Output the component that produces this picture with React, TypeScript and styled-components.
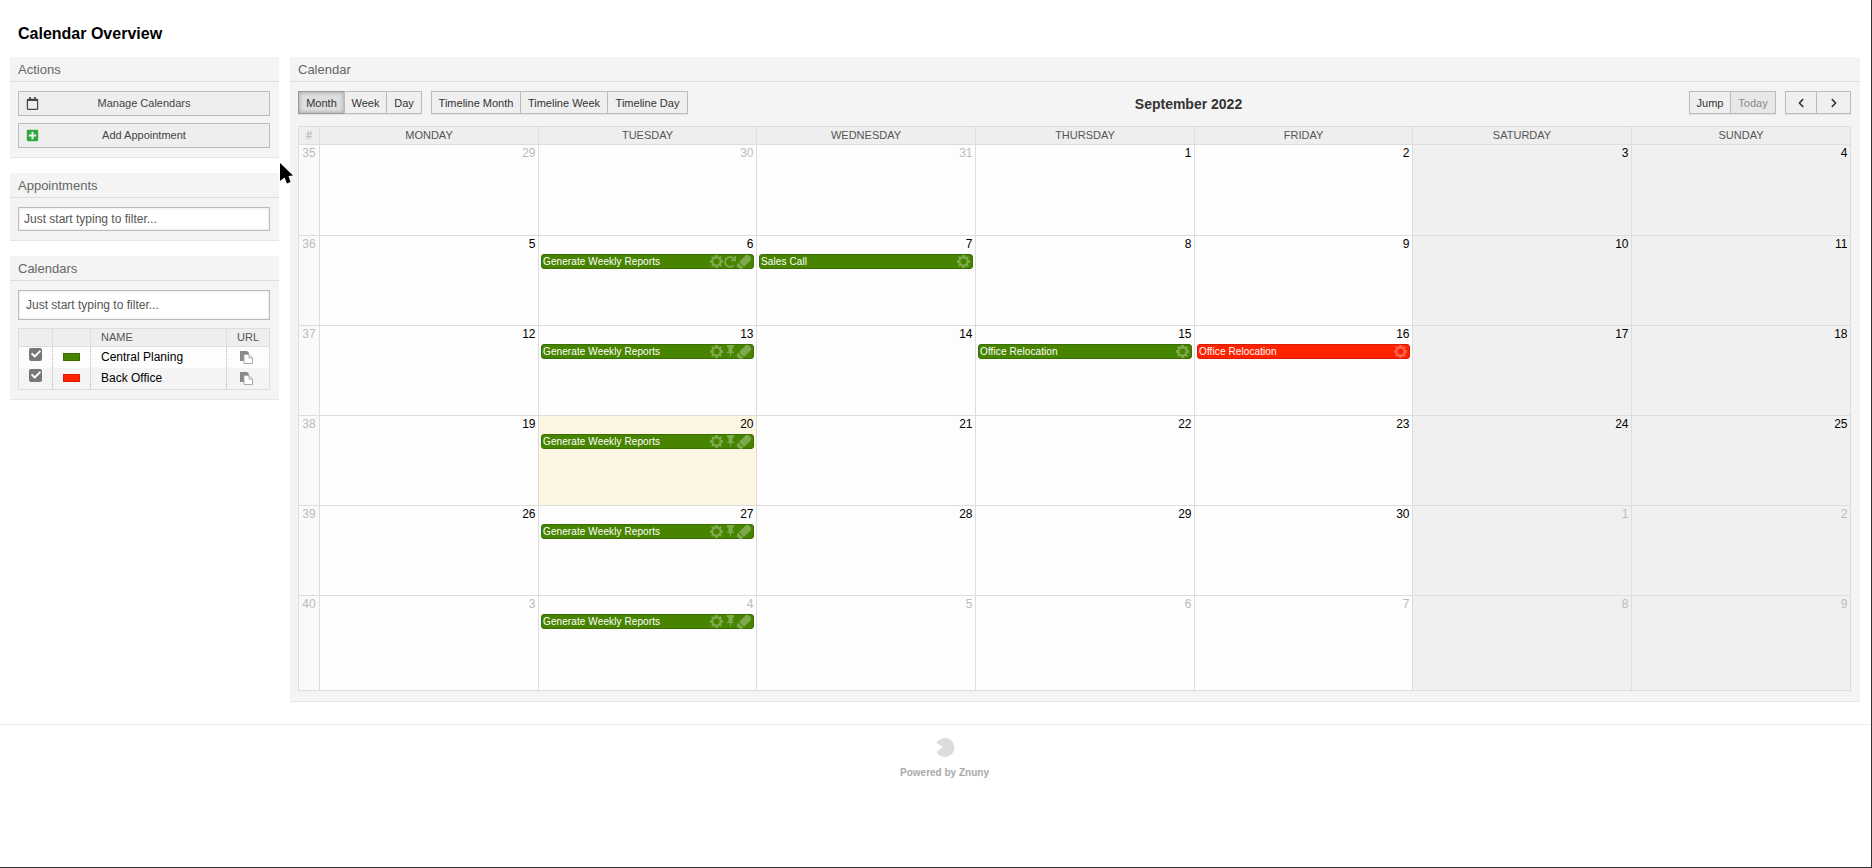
import React from 'react'
import styled, { createGlobalStyle } from 'styled-components'
import {
  FaChevronLeft,
  FaChevronRight,
  FaCheck,
  FaPlusSquare,
  FaRedo,
  FaRegCalendar,
} from 'react-icons/fa'

const GlobalStyle = createGlobalStyle`
  html, body {
    margin: 0;
    padding: 0;
    background: #fff;
    font-family: "Liberation Sans", Arial, sans-serif;
  }
`

const Page = styled.div`
  position: relative;
  box-sizing: border-box;
  width: 1872px;
  height: 868px;
  overflow: hidden;
  border-right: 1px solid #333;
  border-bottom: 1px solid #333;
`

const Title = styled.h1`
  margin: 0;
  padding: 24px 0 0 18px;
  height: 57px;
  box-sizing: border-box;
  font-size: 16px;
  line-height: 19px;
  font-weight: bold;
  color: #000;
`

const Columns = styled.div`
  display: flex;
  align-items: flex-start;
  gap: 11px;
  padding-left: 10px;
`

const Sidebar = styled.aside`
  display: flex;
  flex-direction: column;
  gap: 15px;
  width: 269px;
`

const Panel = styled.section`
  box-sizing: border-box;
  background: #f4f4f4;
  border-bottom: 1px solid #e6e6e6;
`

const MainPanel = styled(Panel)`
  width: 1570px;
`

const PanelHead = styled.h2`
  margin: 0;
  box-sizing: border-box;
  height: 25px;
  padding: 1px 8px 0;
  font-size: 13px;
  line-height: 24px;
  font-weight: normal;
  color: #666;
  border-bottom: 1px solid #ddd;
`

const PanelBody = styled.div`
  display: flex;
  flex-direction: column;
  gap: 7px;
  padding: 9px 9px 9px 8px;
`

const MainBody = styled.div`
  padding: 9px 9px 10px 8px;
`

const ActionButton = styled.button`
  position: relative;
  box-sizing: border-box;
  height: 25px;
  width: 100%;
  padding: 0 0 2px;
  background: #eee;
  border: 1px solid #bbb;
  font: 11px "Liberation Sans", Arial, sans-serif;
  color: #444;
  text-align: center;

  svg {
    position: absolute;
    left: 7px;
    top: 5px;
  }
`

const Filter = styled.input<{ $tall?: boolean }>`
  box-sizing: border-box;
  width: 100%;
  height: ${p => (p.$tall ? '29.5px' : '24px')};
  padding: 0 ${p => (p.$tall ? '7px' : '5px')};
  margin: 0;
  background: #fff;
  border: 1px solid #bbb;
  outline: none;
  box-shadow: inset 0 0 3px #ddd;
  font: 12px "Liberation Sans", Arial, sans-serif;

  &::placeholder {
    color: #555;
    opacity: 1;
  }
`

const CalendarTable = styled.table`
  width: 100%;
  table-layout: fixed;
  border-collapse: collapse;
  margin-top: 1px;
  border: 1px solid #ddd;
  font-size: 12px;
  color: #000;

  th {
    height: 17px;
    padding: 0 10px;
    background: #eee;
    border-left: 1px solid #ddd;
    border-bottom: 1px solid #ddd;
    font-size: 11px;
    font-weight: normal;
    text-align: left;
    color: #555;
  }

  td {
    height: 20px;
    padding: 0 10px;
    border-left: 1px dotted #bbb;
    background: #fdfdfd;
  }

  tr:nth-child(even) td {
    background: #f4f4f4;
  }

  th:first-child,
  td:first-child {
    border-left: none;
  }

  td:nth-child(-n + 2),
  th:nth-child(-n + 2) {
    padding: 0;
    text-align: center;
    line-height: 0;
  }

  td:first-child {
    vertical-align: top;
    padding-top: 1px;
  }
`

const CheckBox = styled.span`
  display: inline-flex;
  align-items: center;
  justify-content: center;
  width: 13px;
  height: 13px;
  border-radius: 2px;
  background: #777;
  color: #fff;
`

const Swatch = styled.span<{ $color: string; $edge: string }>`
  display: inline-block;
  box-sizing: border-box;
  width: 17px;
  height: 8px;
  background: ${p => p.$color};
  border: 1px solid ${p => p.$edge};
`

const CopySvg = styled.svg`
  display: block;
  margin: 1px 0 0 3px;
`

const CopyIcon = () => (
  <CopySvg width="13" height="13" viewBox="0 0 13 13">
    <path d="M0 0h7l2 2v8H0z" fill="#8a8a8a" />
    <path d="M4 3.5h5l3.5 3.5v5.5H4z" fill="#fff" stroke="#aaa" />
    <path d="M9 3.5V7h3.5" fill="none" stroke="#aaa" />
  </CopySvg>
)

const Toolbar = styled.div`
  display: flex;
  align-items: center;
  height: 23px;
  margin-bottom: 12px;
`

const ButtonGroup = styled.div`
  display: flex;
  box-shadow: 0 1px 1px #e4e4e4;
`

const ToolButton = styled.button<{ $w: number; $active?: boolean; $off?: boolean }>`
  box-sizing: border-box;
  width: ${p => p.$w}px;
  height: 23px;
  padding: 0;
  margin-left: -1px;
  border: 1px solid #bbb;
  background: ${p => (p.$active ? '#dedede' : p.$off ? '#e8e8e8' : '#efefef')};
  box-shadow: ${p => (p.$active ? 'inset 0 0 4px #999' : 'none')};
  border-color: ${p => (p.$active ? '#999' : '#bbb')};
  font: 11px "Liberation Sans", Arial, sans-serif;
  color: ${p => (p.$off ? '#888' : '#333')};
  display: flex;
  align-items: center;
  justify-content: center;

  &:first-child {
    margin-left: 0;
  }
`

const Spacer = styled.div<{ $w: number }>`
  width: ${p => p.$w}px;
  flex: none;
`

const MonthTitle = styled.h3`
  flex: 1;
  margin: 0;
  padding-top: 2px;
  font-size: 14px;
  font-weight: bold;
  color: #333;
  text-align: center;
`

const Grid = styled.div`
  display: grid;
  grid-template-columns: 20px 219px 218px 219px 219px 218px 219px 219px;
  grid-template-rows: 17px 91px 90px 90px 90px 90px 95px;
  border: 1px solid #ddd;
`

const HeadCell = styled.div<{ $week?: boolean }>`
  box-sizing: border-box;
  background: #eee;
  border-left: ${p => (p.$week ? 'none' : '1px solid #ddd')};
  font-size: 11px;
  line-height: 16px;
  text-align: center;
  color: ${p => (p.$week ? '#aaa' : '#555')};
`

const WeekCell = styled.div`
  box-sizing: border-box;
  background: #fafafa;
  border-top: 1px solid #ddd;
  padding-top: 1px;
  font-size: 12px;
  line-height: 15px;
  text-align: center;
  color: #bbb;
`

const DayCell = styled.div<{ $bg: string }>`
  box-sizing: border-box;
  min-width: 0;
  background: ${p => p.$bg};
  border-top: 1px solid #ddd;
  border-left: 1px solid #ddd;
`

const DayNumber = styled.div<{ $muted: boolean }>`
  height: 18px;
  padding: 1px 2.5px 0 0;
  box-sizing: border-box;
  font-size: 12px;
  line-height: 15px;
  text-align: right;
  color: ${p => (p.$muted ? '#bbb' : '#000')};
`

const Event = styled.div<{ $red?: boolean }>`
  display: flex;
  align-items: center;
  box-sizing: border-box;
  height: 15px;
  margin: 0 2px;
  padding: 0 2px 0 1px;
  border: 1px solid ${p => (p.$red ? '#d91d00' : '#3b6e00')};
  border-radius: 3px;
  background: ${p => (p.$red ? '#ff2200' : '#478400')};
  font-size: 10px;
  letter-spacing: 0.1px;
  line-height: 13px;
  color: #fff;
  white-space: nowrap;
`

const EventName = styled.span`
  flex: 1;
  overflow: hidden;
`

const EventIcons = styled.span`
  display: flex;
  align-items: center;
  gap: 1px;
  color: rgba(255, 255, 255, 0.3);
`

const GearIcon = () => (
  <svg width="13" height="13" viewBox="0 0 13 13" fill="currentColor">
    <path
      fillRule="evenodd"
      d="M5.2 0h2.6l.3 1.6 1.2.5L10.700 1.200l1.100 1.100-.9 1.400.5 1.200 1.600.3v2.600l-1.600.3-.5 1.200.9 1.400-1.100 1.100-1.400-.9-1.200.5-.3 1.600H5.200l-.3-1.600-1.200-.5-1.400.9-1.100-1.100.9-1.400-.5-1.200L0 7.800V5.200l1.600-.3.5-1.200-.9-1.400 1.100-1.100 1.400.9 1.200-.5zM6.500 3.500a3 3 0 1 0 0 6 3 3 0 0 0 0-6z"
    />
  </svg>
)

const PinSvg = styled.svg`
  margin: 0 2px 0 3px;
`

const PinIcon = () => (
  <PinSvg width="7" height="13" viewBox="0 0 7 13" fill="currentColor">
    <path d="M0 0h7v2L5.500 3v4H7v1H4.300l-.8 5-.8-5H0V7h1.500V3L0 2z" />
  </PinSvg>
)

const TicketIcon = () => (
  <svg width="14" height="14" viewBox="0 0 14 14" fill="currentColor">
    <g transform="rotate(-45 7 7)">
      <path d="M-1 3.500h3.500v7H-1z" />
      <path d="M3.500 3.500H15v7H3.500z" />
    </g>
  </svg>
)

const Footer = styled.footer`
  margin-top: 22px;
  padding: 12px 0 0 18px;
  border-top: 1px solid #eee;
  display: flex;
  flex-direction: column;
  align-items: center;
  gap: 10px;
  font-size: 10px;
  font-weight: bold;
  line-height: 12px;
  color: #aaa;
`

const Cursor = styled.svg`
  position: absolute;
  left: 280px;
  top: 163px;
`

type Ev = { name: string; icons: ('redo' | 'pin' | 'ticket')[]; red?: boolean }

const series = (second: 'redo' | 'pin'): Ev => ({
  name: 'Generate Weekly Reports',
  icons: [second, 'ticket'],
})

// cell index counted from monday 29 aug
const events: Record<number, Ev> = {
  8: series('redo'),
  9: { name: 'Sales Call', icons: [] },
  15: series('pin'),
  17: { name: 'Office Relocation', icons: [] },
  18: { name: 'Office Relocation', icons: [], red: true },
  22: series('pin'),
  29: series('pin'),
  36: series('pin'),
}

const dayNames = ['MONDAY', 'TUESDAY', 'WEDNESDAY', 'THURSDAY', 'FRIDAY', 'SATURDAY', 'SUNDAY']
const weeks = [35, 36, 37, 38, 39, 40]

function dayOf(i: number) {
  if (i < 3) return { day: 29 + i, muted: true }
  if (i < 33) return { day: i - 2, muted: false }
  return { day: i - 32, muted: true }
}

function cellColor(i: number) {
  if (i === 22) return '#fdf6e2'
  return i % 7 >= 5 ? '#f0f0f0' : '#fdfdfd'
}

function EventBar({ ev }: { ev: Ev }) {
  return (
    <Event $red={ev.red}>
      <EventName>{ev.name}</EventName>
      <EventIcons>
        <GearIcon />
        {ev.icons.map(icon => {
          if (icon === 'redo') return <FaRedo key={icon} size={12} />
          if (icon === 'pin') return <PinIcon key={icon} />
          return <TicketIcon key={icon} />
        })}
      </EventIcons>
    </Event>
  )
}

const calendars = [
  { name: 'Central Planing', color: '#478400', edge: '#3b6e00' },
  { name: 'Back Office', color: '#ff2200', edge: '#d91d00' },
]

export default function App() {
  return (
    <Page>
      <GlobalStyle />
      <Title>Calendar Overview</Title>
      <Columns>
        <Sidebar>
          <Panel>
            <PanelHead>Actions</PanelHead>
            <PanelBody>
              <ActionButton>
                <FaRegCalendar size={13} color="#444" />
                Manage Calendars
              </ActionButton>
              <ActionButton>
                <FaPlusSquare size={13} color="#2eaa3a" />
                Add Appointment
              </ActionButton>
            </PanelBody>
          </Panel>
          <Panel>
            <PanelHead>Appointments</PanelHead>
            <PanelBody>
              <Filter placeholder="Just start typing to filter..." />
            </PanelBody>
          </Panel>
          <Panel>
            <PanelHead>Calendars</PanelHead>
            <PanelBody>
              <Filter $tall placeholder="Just start typing to filter..." />
              <CalendarTable>
                <colgroup>
                  <col style={{ width: 34 }} />
                  <col style={{ width: 38 }} />
                  <col />
                  <col style={{ width: 43 }} />
                </colgroup>
                <thead>
                  <tr>
                    <th />
                    <th />
                    <th>NAME</th>
                    <th>URL</th>
                  </tr>
                </thead>
                <tbody>
                  {calendars.map(c => (
                    <tr key={c.name}>
                      <td>
                        <CheckBox>
                          <FaCheck size={10} />
                        </CheckBox>
                      </td>
                      <td>
                        <Swatch $color={c.color} $edge={c.edge} />
                      </td>
                      <td>{c.name}</td>
                      <td>
                        <CopyIcon />
                      </td>
                    </tr>
                  ))}
                </tbody>
              </CalendarTable>
            </PanelBody>
          </Panel>
        </Sidebar>
        <MainPanel>
          <PanelHead>Calendar</PanelHead>
          <MainBody>
            <Toolbar>
              <ButtonGroup>
                <ToolButton $w={47} $active>Month</ToolButton>
                <ToolButton $w={43}>Week</ToolButton>
                <ToolButton $w={36}>Day</ToolButton>
              </ButtonGroup>
              <Spacer $w={9} />
              <ButtonGroup>
                <ToolButton $w={90}>Timeline Month</ToolButton>
                <ToolButton $w={88}>Timeline Week</ToolButton>
                <ToolButton $w={81}>Timeline Day</ToolButton>
              </ButtonGroup>
              <MonthTitle>September 2022</MonthTitle>
              <ButtonGroup>
                <ToolButton $w={42}>Jump</ToolButton>
                <ToolButton $w={46} $off>Today</ToolButton>
              </ButtonGroup>
              <Spacer $w={9} />
              <ButtonGroup>
                <ToolButton $w={32}><FaChevronLeft size={10} /></ToolButton>
                <ToolButton $w={35}><FaChevronRight size={10} /></ToolButton>
              </ButtonGroup>
            </Toolbar>
            <Grid>
              <HeadCell $week>#</HeadCell>
              {dayNames.map(d => (
                <HeadCell key={d}>{d}</HeadCell>
              ))}
              {weeks.map((w, row) => (
                <React.Fragment key={w}>
                  <WeekCell>{w}</WeekCell>
                  {dayNames.map((_, col) => {
                    const i = row * 7 + col
                    const { day, muted } = dayOf(i)
                    return (
                      <DayCell key={i} $bg={cellColor(i)}>
                        <DayNumber $muted={muted}>{day}</DayNumber>
                        {events[i] && <EventBar ev={events[i]} />}
                      </DayCell>
                    )
                  })}
                </React.Fragment>
              ))}
            </Grid>
          </MainBody>
        </MainPanel>
      </Columns>
      <Footer>
        <svg width="20" height="20" viewBox="0 0 20 20">
          <path d="M8 10 L1.500 6 A9.500 9.500 0 1 1 1.500 15 Z" fill="#dcdcdc" />
        </svg>
        Powered by Znuny
      </Footer>
      <Cursor width="14" height="22" viewBox="0 0 14 22">
        <path d="M0 0 L13 12.500 L8.500 13 L10.500 19 L7 20.500 L4.500 14.500 L0 18 Z" fill="#000" />
      </Cursor>
    </Page>
  )
}
